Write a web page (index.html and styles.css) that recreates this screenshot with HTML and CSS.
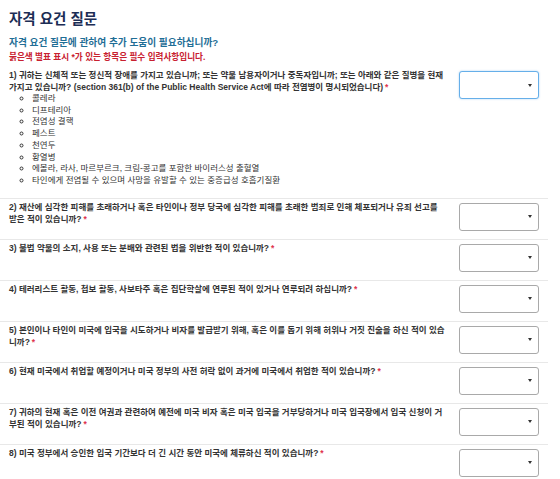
FILE: index.html
```html
<!DOCTYPE html>
<html lang="ko">
<head>
<meta charset="utf-8">
<title>자격 요건 질문</title>
<link rel="stylesheet" href="styles.css">
</head>
<body>
<div class="page">
  <h1 class="title">자격 요건 질문</h1>
  <h2 class="subtitle">자격 요건 질문에 관하여 추가 도움이 필요하십니까?</h2>
  <p class="required-note">붉은색 별표 표시 *가 있는 항목은 필수 입력사항입니다.</p>

  <div class="row first">
    <div class="question">
      <div class="label">1) 귀하는 신체적 또는 정신적 장애를 가지고 있습니까; 또는 약물 남용자이거나 중독자입니까; 또는 아래와 같은 질병을 현재 가지고 있습니까? (section 361(b) of the Public Health Service Act에 따라 전염병이 명시되었습니다)<span class="req">*</span></div>
      <ul class="diseases">
        <li>콜레라</li>
        <li>디프테리아</li>
        <li>전염성 결핵</li>
        <li>페스트</li>
        <li>천연두</li>
        <li>황열병</li>
        <li>에볼라, 라사, 마르부르크, 크림-콩고를 포함한 바이러스성 출혈열</li>
        <li>타인에게 전염될 수 있으며 사망을 유발할 수 있는 중증급성 호흡기질환</li>
      </ul>
    </div>
    <div class="select focused"><span class="caret"></span></div>
  </div>

  <div class="row">
    <div class="question"><div class="label">2) 재산에 심각한 피해를 초래하거나 혹은 타인이나 정부 당국에 심각한 피해를 초래한 범죄로 인해 체포되거나 유죄 선고를 받은 적이 있습니까?<span class="req">*</span></div></div>
    <div class="select"><span class="caret"></span></div>
  </div>

  <div class="row">
    <div class="question"><div class="label">3) 불법 약물의 소지, 사용 또는 분배와 관련된 법을 위반한 적이 있습니까?<span class="req">*</span></div></div>
    <div class="select"><span class="caret"></span></div>
  </div>

  <div class="row">
    <div class="question"><div class="label">4) 테러리스트 활동, 첩보 활동, 사보타주 혹은 집단학살에 연루된 적이 있거나 연루되려 하십니까?<span class="req">*</span></div></div>
    <div class="select"><span class="caret"></span></div>
  </div>

  <div class="row">
    <div class="question"><div class="label">5) 본인이나 타인이 미국에 입국을 시도하거나 비자를 발급받기 위해, 혹은 이를 돕기 위해 허위나 거짓 진술을 하신 적이 있습니까?<span class="req">*</span></div></div>
    <div class="select"><span class="caret"></span></div>
  </div>

  <div class="row">
    <div class="question"><div class="label">6) 현재 미국에서 취업할 예정이거나 미국 정부의 사전 허락 없이 과거에 미국에서 취업한 적이 있습니까?<span class="req">*</span></div></div>
    <div class="select"><span class="caret"></span></div>
  </div>

  <div class="row">
    <div class="question"><div class="label">7) 귀하의 현재 혹은 이전 여권과 관련하여 예전에 미국 비자 혹은 미국 입국을 거부당하거나 미국 입국장에서 입국 신청이 거부된 적이 있습니까?<span class="req">*</span></div></div>
    <div class="select"><span class="caret"></span></div>
  </div>

  <div class="row">
    <div class="question"><div class="label">8) 미국 정부에서 승인한 입국 기간보다 더 긴 시간 동안 미국에 체류하신 적이 있습니까?<span class="req">*</span></div></div>
    <div class="select"><span class="caret"></span></div>
  </div>
</div>
</body>
</html>
```

FILE: styles.css
```css
html, body {
  margin: 0;
  padding: 0;
  background: #ffffff;
}

body {
  font-family: "Liberation Sans", "Noto Sans CJK KR", sans-serif;
  color: #333333;
}

.page {
  width: 548px;
}

.title {
  margin: 0;
  padding: 8px 9px 0;
  font-size: 14.5px;
  line-height: 22px;
  font-weight: bold;
  color: #1c2d55;
}

.subtitle {
  margin: 0;
  padding: 6px 9px 0;
  font-size: 9.7px;
  line-height: 14px;
  font-weight: bold;
  color: #1f6e96;
}

.required-note {
  margin: 0;
  padding: 1px 9px 0;
  font-size: 8.6px;
  line-height: 12px;
  font-weight: bold;
  color: #c8202f;
}

.row {
  display: flex;
  align-items: flex-start;
  padding: 2px 9px 8px 9px;
  border-top: 1px solid #e8e8e8;
}

.row.first {
  border-top: none;
  margin-top: 4px;
  padding-bottom: 11px;
}

.question {
  flex: 1;
  padding-right: 13px;
}

.label {
  font-size: 8.5px;
  line-height: 12px;
  font-weight: bold;
  color: #333333;
}

.req {
  color: #e0334d;
  margin-left: 2px;
}

.diseases {
  margin: 0;
  padding: 0 0 0 23px;
  list-style: circle;
  font-size: 8.5px;
  line-height: 11.7px;
  color: #333333;
}

.select {
  flex: none;
  width: 72px;
  height: 26px;
  margin-top: 2px;
  border: 1px solid #a9a9a9;
  border-radius: 3px;
  display: flex;
  align-items: center;
  justify-content: flex-end;
  padding-right: 6px;
  box-sizing: content-box;
  background: #ffffff;
}

.select.focused {
  border-color: #66afe9;
  box-shadow: 0 0 2px rgba(102, 175, 233, 0.6);
}

.caret {
  width: 0;
  height: 0;
  border-left: 2px solid transparent;
  border-right: 2px solid transparent;
  border-top: 3px solid #333333;
}
```
